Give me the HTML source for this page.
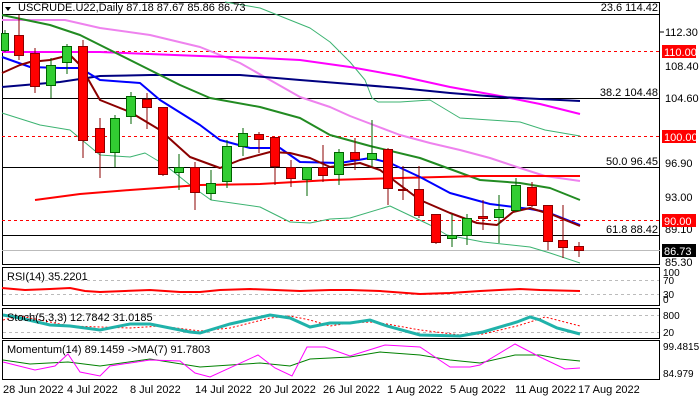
<!DOCTYPE html>
<html><head><meta charset="utf-8"><style>
body{margin:0;background:#fff;width:700px;height:400px;overflow:hidden}
svg{display:block;font-family:"Liberation Sans",sans-serif;font-size:11px}
</style></head><body>
<svg width="700" height="400" viewBox="0 0 700 400" xmlns="http://www.w3.org/2000/svg">
<rect width="700" height="400" fill="#fff"/>
<!-- panel frames -->
<g fill="none" stroke="#000" stroke-width="1">
<rect x="2.5" y="2.5" width="657" height="262"/>
<rect x="2.5" y="267.5" width="657" height="38"/>
<rect x="2.5" y="308.5" width="657" height="30"/>
<rect x="2.5" y="340.5" width="657" height="39"/>
</g>
<!-- fib lines -->
<g stroke="#000" stroke-width="1">
<line x1="2" y1="14.5" x2="660" y2="14.5"/>
<line x1="2" y1="98.5" x2="660" y2="98.5"/>
<line x1="2" y1="167.5" x2="660" y2="167.5"/>
<line x1="2" y1="235.5" x2="660" y2="235.5"/>
</g>
<g stroke="#f00" stroke-width="1" stroke-dasharray="3,3">
<line x1="2" y1="51.5" x2="660" y2="51.5"/>
<line x1="2" y1="136.5" x2="660" y2="136.5"/>
<line x1="2" y1="220.5" x2="660" y2="220.5"/>
</g>
<line x1="2" y1="250.5" x2="660" y2="250.5" stroke="#bbb"/>
<g font-size="11" fill="#000" text-anchor="end">
<text x="658" y="11">23.6 114.42</text>
<text x="658" y="96">38.2 104.48</text>
<text x="658" y="165">50.0 96.45</text>
<text x="658" y="233">61.8 88.42</text>
</g>
<!-- MAs -->
<g fill="none" stroke-linejoin="round">
<polyline stroke="#3cb371" stroke-width="1" points="225,2 260,8 290,20 310,28 330,42 350,62 365,80 372,98 378,102 400,102 430,100 460,118 490,120 520,122 545,130 580,136"/>
<polyline stroke="#3cb371" stroke-width="1" points="2,113 40,125 70,130 100,155 130,157 145,153 165,165 190,185 211,200 260,207 290,222 310,223 330,219 350,218 390,206 430,225 447,235 483,242 530,247 550,253 580,263"/>
<polyline stroke="#ee82ee" stroke-width="2" points="2,20 65,20 100,28 150,35 200,47 240,63 270,80 300,97 330,107 350,116 400,135 430,143 460,150 490,158 520,168 545,176 580,181"/>
<polyline stroke="#f0f" stroke-width="2" points="2,52 100,52 200,56 260,58 300,60 350,67 400,76 450,87 500,96 540,104 580,114"/>
<polyline stroke="#000080" stroke-width="2" points="2,87 60,82 100,76 150,75 240,75 300,80 350,84 400,88 450,93 500,97 540,99 580,101"/>
<polyline stroke="#228b22" stroke-width="2" points="2,15 50,25 80,35 110,50 140,65 180,85 210,98 260,107 300,118 330,135 370,146 420,158 480,180 520,183 550,188 580,200"/>
<polyline stroke="#f00" stroke-width="2" points="35,200 80,194 130,190 200,185 260,184 330,180 400,178 480,176 580,176"/>
<polyline stroke="#0000ff" stroke-width="2" points="2,57 30,67 60,68 80,68 100,80 140,83 160,100 200,125 220,140 250,148 280,148 300,162 340,163 370,158 390,163 420,177 450,193 490,204 530,209 547,212 580,225"/>
<polyline stroke="#8b0000" stroke-width="2" points="2,73 20,65 30,62 50,60 70,55 80,65 100,100 130,112 160,130 190,157 220,168 240,160 270,152 290,153 310,158 330,167 360,163 380,170 400,185 420,200 450,213 477,223 497,225 513,212 530,208 553,215 580,226"/>
</g>
<!-- candles: wicks then bodies -->
<g stroke="#000" stroke-width="1">
</g>
<g id="c">
<!-- green -->
<g fill="#32cd32" stroke="#006400">
<line x1="5" y1="30" x2="5" y2="52"/><rect x="1.5" y="33.5" width="7" height="17"/>
<line x1="51" y1="58" x2="51" y2="98"/><rect x="46.5" y="65.5" width="9" height="20"/>
<line x1="67" y1="44" x2="67" y2="74"/><rect x="62.5" y="46.5" width="9" height="16"/>
<line x1="115" y1="115" x2="115" y2="167"/><rect x="110.5" y="118.5" width="9" height="34"/>
<line x1="131" y1="92" x2="131" y2="124"/><rect x="126.5" y="96.5" width="9" height="20"/>
<line x1="179" y1="154" x2="179" y2="190"/><rect x="174.5" y="167.5" width="9" height="5"/>
<line x1="211" y1="170" x2="211" y2="200"/><rect x="206.5" y="183.5" width="9" height="10"/>
<line x1="227" y1="140" x2="227" y2="188"/><rect x="222.5" y="146.5" width="9" height="35"/>
<line x1="243" y1="128" x2="243" y2="156"/><rect x="238.5" y="133.5" width="9" height="13"/>
<line x1="307" y1="167" x2="307" y2="196"/><rect x="302.5" y="167.5" width="9" height="12"/>
<line x1="339" y1="149" x2="339" y2="185"/><rect x="334.5" y="152.5" width="9" height="22"/>
<line x1="372" y1="120" x2="372" y2="167"/><rect x="367.5" y="153.5" width="9" height="6"/>
<line x1="452" y1="214" x2="452" y2="247"/><rect x="447.5" y="235.5" width="9" height="3"/>
<line x1="467" y1="214" x2="467" y2="245"/><rect x="462.5" y="218.5" width="9" height="17"/>
<line x1="499" y1="195" x2="499" y2="243"/><rect x="494.5" y="209.5" width="9" height="8"/>
<line x1="516" y1="178" x2="516" y2="212"/><rect x="511.5" y="185.5" width="9" height="25"/>
</g>
<g fill="#f00" stroke="#8b0000">
<line x1="19" y1="15" x2="19" y2="60"/><rect x="14.5" y="35.5" width="9" height="20"/>
<line x1="35" y1="48" x2="35" y2="93"/><rect x="30.5" y="53.5" width="9" height="33"/>
<line x1="83" y1="40" x2="83" y2="158"/><rect x="78.5" y="46.5" width="9" height="94"/>
<line x1="100" y1="118" x2="100" y2="178"/><rect x="95.5" y="128.5" width="9" height="24"/>
<line x1="147" y1="93" x2="147" y2="129"/><rect x="142.5" y="99.5" width="9" height="8"/>
<line x1="163" y1="107" x2="163" y2="176"/><rect x="158.5" y="107.5" width="9" height="67"/>
<line x1="195" y1="162" x2="195" y2="210"/><rect x="190.5" y="167.5" width="9" height="25"/>
<line x1="259" y1="132" x2="259" y2="153"/><rect x="254.5" y="134.5" width="9" height="5"/>
<line x1="275" y1="137" x2="275" y2="185"/><rect x="270.5" y="137.5" width="9" height="29"/>
<line x1="291" y1="160" x2="291" y2="187"/><rect x="286.5" y="167.5" width="9" height="11"/>
<line x1="323" y1="145" x2="323" y2="182"/><rect x="318.5" y="167.5" width="9" height="8"/>
<line x1="355" y1="138" x2="355" y2="170"/><rect x="350.5" y="152.5" width="9" height="7"/>
<line x1="388" y1="148" x2="388" y2="205"/><rect x="383.5" y="149.5" width="9" height="39"/>
<line x1="403" y1="166" x2="403" y2="200"/><rect x="398.5" y="189.5" width="9" height="1"/>
<line x1="419" y1="166" x2="419" y2="218"/><rect x="414.5" y="189.5" width="9" height="26"/>
<line x1="436" y1="214" x2="436" y2="244"/><rect x="431.5" y="214.5" width="9" height="28"/>
<line x1="483" y1="200" x2="483" y2="230"/><rect x="478.5" y="216.5" width="9" height="2"/>
<line x1="532" y1="182" x2="532" y2="207"/><rect x="527.5" y="187.5" width="9" height="18"/>
<line x1="548" y1="205" x2="548" y2="250"/><rect x="543.5" y="205.5" width="9" height="36"/>
<line x1="563" y1="205" x2="563" y2="258"/><rect x="558.5" y="240.5" width="9" height="7"/>
<line x1="579" y1="242" x2="579" y2="257"/><rect x="574.5" y="246.5" width="9" height="4"/>
</g>
</g>
<!-- header -->
<path d="M5,7 L11,7 L8,11 Z" fill="#000"/>
<text x="18" y="11" fill="#000">USCRUDE.U22,Daily  87.18 87.67 85.86 86.73</text>
<!-- price axis -->
<g fill="#000" font-size="11">
<line x1="660" y1="32" x2="664" y2="32" stroke="#000"/>
<text x="665" y="36">112.30</text>
<text x="665" y="70">108.40</text>
<text x="665" y="102">104.60</text>
<text x="665" y="167">96.90</text>
<text x="665" y="201">93.00</text>
<text x="665" y="233">89.10</text>
<text x="665" y="266">85.30</text>
</g>
<rect x="662" y="45" width="34" height="13" fill="#f00"/><text x="664" y="56" fill="#fff">110.00</text>
<rect x="662" y="130" width="34" height="13" fill="#f00"/><text x="664" y="141" fill="#fff">100.00</text>
<rect x="662" y="214" width="34" height="13" fill="#f00"/><text x="664" y="225" fill="#fff">90.00</text>
<rect x="662" y="244" width="34" height="13" fill="#000"/><text x="664" y="255" fill="#fff">86.73</text>
<!-- RSI -->
<g stroke="#bbb" stroke-dasharray="3,3"><line x1="3" y1="280.5" x2="659" y2="280.5"/><line x1="3" y1="294.5" x2="659" y2="294.5"/>
<line x1="3" y1="315.5" x2="659" y2="315.5"/><line x1="3" y1="332.5" x2="659" y2="332.5"/></g>
<text x="7" y="280" fill="#000">RSI(14) 35.2201</text>
<polyline fill="none" stroke="#f00" stroke-width="2" points="2,288 25,290 50,289 70,288 85,291 100,292 150,290 180,292 200,292 220,290 250,289 300,291 330,290 350,290 380,291 420,294 450,293 480,291 520,289 540,290 580,291"/>
<g fill="#000" font-size="10"><text x="663" y="276">100</text><text x="663" y="284">70</text><text x="663" y="298">30</text><text x="663" y="303">0</text></g>
<!-- Stoch -->
<polyline fill="none" stroke="#f00" stroke-width="1" stroke-dasharray="2,2" points="3,320 20,316 50,322 70,326 100,327 130,328 160,326 200,331 230,328 270,318 290,316 310,320 330,326 350,323 370,322 387,324 420,330 460,335 483,334 517,326 530,322 545,317 557,320 580,326"/>
<polyline fill="none" stroke="#20b2aa" stroke-width="3" points="3,315 20,318 50,325 70,326 100,330 130,324 150,324 190,332 200,333 230,324 270,315 290,318 310,327 330,323 350,323 370,320 387,326 420,335 460,336 483,332 517,322 530,317 540,320 557,328 580,334"/>
<text x="7" y="321" fill="#000">Stoch(5,3,3) 12.7842 31.0185</text>
<g fill="#000" font-size="10"><text x="663" y="319">800</text><text x="663" y="336">20</text></g>
<!-- Momentum -->
<polyline fill="none" stroke="#008000" stroke-width="1" points="3,360 30,364 68,362 100,366 150,359 200,367 260,363 290,366 310,359 350,357 380,352 420,355 450,360 480,363 515,355 540,355 560,359 580,361"/>
<polyline fill="none" stroke="#f0f" stroke-width="1" points="3,362 35,370 55,366 68,354 80,372 100,376 110,366 150,360 180,361 195,373 210,377 258,355 275,368 292,376 307,347 325,347 350,356 385,345 420,347 450,367 470,367 480,365 515,344 540,357 565,369 580,368"/>
<text x="7" y="353" fill="#000">Momentum(14) 89.1459   -&gt;MA(7) 91.7803</text>
<g fill="#000" font-size="10"><text x="663" y="350">99.4815</text><text x="663" y="377">84.979</text></g>
<!-- dates -->
<g fill="#000" font-size="11">
<text x="3" y="393">28 Jun 2022</text>
<text x="67" y="393">4 Jul 2022</text>
<text x="130" y="393">8 Jul 2022</text>
<text x="195" y="393">14 Jul 2022</text>
<text x="259" y="393">20 Jul 2022</text>
<text x="323" y="393">26 Jul 2022</text>
<text x="387" y="393">1 Aug 2022</text>
<text x="450" y="393">5 Aug 2022</text>
<text x="515" y="393">11 Aug 2022</text>
<text x="578" y="393">17 Aug 2022</text>
</g>
</svg>
</body></html>
